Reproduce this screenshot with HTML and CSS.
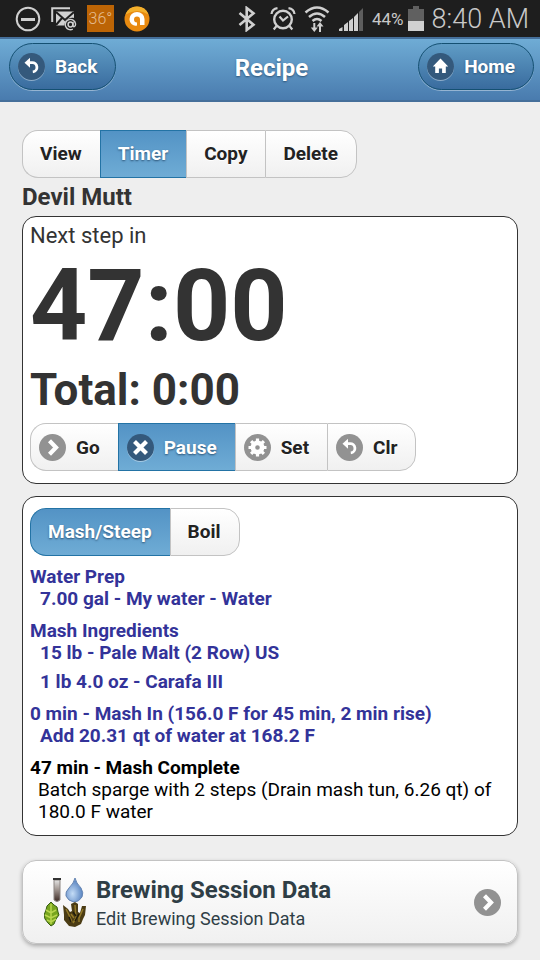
FILE: index.html
```
<!DOCTYPE html>
<html lang="en">

<head>
  <meta charset="UTF-8" />
  <title>Recipe</title>
  <meta name="viewport" content="width=device-width, initial-scale=1.0" />
  <link rel="stylesheet" href="styles.css">
</head>

<body>
  <!-- shared icons -->
  <svg class="sprite" aria-hidden="true">
    <symbol id="ico-back" viewBox="0 0 27 27">
      <path d="M10.500 9.700h3.300a4.600 4.600 0 0 1 1 9.200" fill="none" stroke="#fff" stroke-width="2.800" />
      <path d="M6.500 9.700l5.500-5v10z" fill="#fff" />
    </symbol>
    <symbol id="ico-home" viewBox="0 0 27 27">
      <path d="M13.5 5.5L5.8 13.6h2.4V20h3.700v-4.500h3.200V20h3.700v-6.400h2.400z" fill="#fff" />
    </symbol>
    <symbol id="ico-arrow" viewBox="0 0 27 27">
      <path d="M10.500 6.800l6.500 6.700-6.500 6.700" fill="none" stroke="#fff" stroke-width="4.200" />
    </symbol>
    <symbol id="ico-delete" viewBox="0 0 27 27">
      <path d="M7.500 7.500l12 12M19.500 7.500l-12 12" fill="none" stroke="#fff" stroke-width="4.200" />
    </symbol>
    <symbol id="ico-gear" viewBox="0 0 27 27">
      <circle cx="13.500" cy="13.500" r="4.600" fill="none" stroke="#fff" stroke-width="4.600" />
      <path d="M13.500 4.500v4M13.500 18.500v4M4.500 13.500h4M18.500 13.500h4M7.100 7.100l3 3M16.900 16.900l3 3M19.900 7.100l-3 3M10.100 16.900l-3 3" stroke="#fff" stroke-width="3.200" />
    </symbol>
  </svg>

  <div class="status">
    <div class="status-left">
      <svg width="26" height="26" viewBox="0 0 26 26">
        <circle cx="13" cy="13" r="11.300" fill="none" stroke="#d0d0d0" stroke-width="2" />
        <path d="M6 13.500h14" stroke="#d0d0d0" stroke-width="3" />
      </svg>
      <svg width="26" height="26" viewBox="0 0 26 26">
        <path d="M1.200 16V2.200H19" fill="none" stroke="#d0d0d0" stroke-width="2" />
        <path d="M5 5.500h18v6.500c-5-1-9 2-9.600 7.500H5z" fill="#d0d0d0" />
        <path d="M5 6l9 8 9-8M5 19l6-7" fill="none" stroke="#1e1e1e" stroke-width="2" />
        <circle cx="19.500" cy="18.500" r="2.400" fill="none" stroke="#d0d0d0" stroke-width="1.500" />
        <path d="M22 16v3.500c0 2 2.600 1.500 2.600-1.500a5.200 5.200 0 1 0-2.800 5.200" fill="none" stroke="#d0d0d0" stroke-width="1.400" />
      </svg>
      <span class="temp">36°</span>
      <svg width="26" height="26" viewBox="0 0 26 26">
        <circle cx="13" cy="13" r="12.500" fill="#e98a10" />
        <path d="M1.500 8.500a12.300 12.300 0 0 1 23 0q-11-7-23 0z" fill="#f3b02c" />
        <path d="M9.500 19.300Q5.500 17.500 5.500 13a7.500 7 0 0 1 15 0v6h-4.500v-5.500a3 3 0 1 0-3 3v3q-2 .5-3.500-.2z" fill="#fff" />
      </svg>
    </div>
    <div class="status-right">
      <svg class="bluetooth" width="18" height="26" viewBox="0 0 18 26">
        <path d="M1.500 7l14 11.700L8.700 24V2l6.800 5.300-14 11.700" fill="none" stroke="#d0d0d0" stroke-width="2.600" />
      </svg>
      <svg width="26" height="26" viewBox="0 0 26 26">
        <circle cx="13" cy="13.500" r="8.800" fill="none" stroke="#d0d0d0" stroke-width="2.400" />
        <path d="M9.500 10.500l3.500 4 5-4M6.500 20l-2.800 3.500M19.500 20l2.800 3.500" fill="none" stroke="#d0d0d0" stroke-width="2.200" />
        <path d="M1.500 8q.5-5 6-5.800M24.500 8q-.5-5-6-5.800" fill="none" stroke="#d0d0d0" stroke-width="2.200" />
      </svg>
      <svg width="26" height="28" viewBox="0 0 26 28">
        <path d="M1.500 7.500q11.500-10 23 0M5 12q8-7 16 0M8.500 16q4.500-4 9 0" fill="none" stroke="#d0d0d0" stroke-width="2.500" />
        <path d="M10.300 18v7M16 20v7" stroke="#d0d0d0" stroke-width="2" />
        <path d="M6.800 22.500h7L10.300 27zM12.500 21.500h7L16 17z" fill="#d0d0d0" />
      </svg>
      <svg width="26" height="26" viewBox="0 0 26 26">
        <path d="M1 25v-2l3.500-2v4zM6 25v-6l4-3v9zM11 25V15l4-3v13zM16 25V11l4-4v18z" fill="#d0d0d0" />
        <path d="M21 25V6l4-4v23z" fill="#5d5d5d" />
      </svg>
      <span class="percent">44%</span>
      <svg width="16" height="25" viewBox="0 0 16 25">
        <path d="M0 3h5V0h6v3h5v12H0z" fill="#606060" />
        <path d="M0 15h16v10H0z" fill="#d0d0d0" />
      </svg>
      <span class="clock">8:40 AM</span>
    </div>
  </div>

  <header class="header">
    <a class="pill" href="#back"><svg class="icon icon-dark"><use href="#ico-back" /></svg>Back</a>
    <h1>Recipe</h1>
    <a class="pill" href="#home"><svg class="icon icon-dark"><use href="#ico-home" /></svg>Home</a>
  </header>

  <main class="content">
    <div class="group">
      <button type="button">View</button>
      <button type="button" class="active">Timer</button>
      <button type="button">Copy</button>
      <button type="button">Delete</button>
    </div>
    <h2>Devil Mutt</h2>

    <section class="box timer">
      <div class="next">Next step in</div>
      <div class="countdown">47:00</div>
      <div class="total">Total: 0:00</div>
      <div class="group group-icons">
        <button type="button"><svg class="icon"><use href="#ico-arrow" /></svg>Go</button>
        <button type="button" class="active"><svg class="icon icon-dark"><use href="#ico-delete" /></svg>Pause</button>
        <button type="button"><svg class="icon"><use href="#ico-gear" /></svg>Set</button>
        <button type="button"><svg class="icon"><use href="#ico-back" /></svg>Clr</button>
      </div>
    </section>

    <section class="box steps">
      <div class="group">
        <button type="button" class="active">Mash/Steep</button>
        <button type="button">Boil</button>
      </div>
      <div class="step done">
        <h3>Water Prep</h3>
        <p>7.00 gal - My water - Water</p>
      </div>
      <div class="step done">
        <h3>Mash Ingredients</h3>
        <p>15 lb - Pale Malt (2 Row) US</p>
        <p>1 lb 4.0 oz - Carafa III</p>
      </div>
      <div class="step done">
        <h3>0 min - Mash In (156.0 F for 45 min, 2 min rise)</h3>
        <p>Add 20.31 qt of water at 168.2 F</p>
      </div>
      <div class="step">
        <h3>47 min - Mash Complete</h3>
        <p>Batch sparge with 2 steps (Drain mash tun, 6.26 qt) of 180.0 F water</p>
      </div>
    </section>

    <a class="session" href="#session">
      <svg class="thumb" width="42" height="50" viewBox="0 0 42 50">
        <defs>
          <linearGradient id="tube" x1="0" y1="0" x2="0" y2="1">
            <stop offset="0" stop-color="#e4e4e4" />
            <stop offset=".4" stop-color="#a79d98" />
            <stop offset="1" stop-color="#3c2a24" />
          </linearGradient>
          <radialGradient id="drop" cx=".4" cy=".65" r=".6">
            <stop offset="0" stop-color="#c4dcf6" />
            <stop offset="1" stop-color="#5682c0" />
          </radialGradient>
        </defs>
        <path d="M10 3h6v20q-3 3-6 0z" fill="url(#tube)" stroke="#8b8582" />
        <path d="M9 2h8" stroke="#333" stroke-width="2" />
        <path d="M31 1q1 5 6 10 3 5 1 9-3 5-8 5-6-1-8-6-1-4 3-8 5-5 6-10z" fill="url(#drop)" stroke="#6686b3" />
        <path d="M7 25l3 3 3 2 1 5 1 3-3 4-2 5-3 2-3-3-3-4-1-4 2-5 1-4z" fill="#77a51e" stroke="#375d12" />
        <path d="M7 27v20M2 33l5 3 5-3M1 38l6 3 6-3M3 43l4 2 5-3" fill="none" stroke="#b9d64e" stroke-width="1.500" />
        <path d="M19 28l5 4 2 3 2-1-1-7 4-2 3 2v8l2 1 2-7h4l-1 9-2 4-2 5-6 3-6-1-5-6v-5z" fill="#4b3c14" />
        <path d="M22 32l4 8 2 5M31 28l1 13-3 5M39 32l-4 9v4M27 37l3 4" fill="none" stroke="#937928" stroke-width="1.500" />
        <path d="M29 35l3 4M35 37l-4 7M25 40l2 5" fill="none" stroke="#211c0c" stroke-width="1.500" />
      </svg>
      <span class="session-text">
        <strong>Brewing Session Data</strong>
        <small>Edit Brewing Session Data</small>
      </span>
      <svg class="icon"><use href="#ico-arrow" /></svg>
    </a>
  </main>
</body>

</html>
```
FILE: styles.css
```
* {
  box-sizing: border-box;
}

body {
  margin: 0;
  background: #eee;
  font-family: Roboto, "Liberation Sans", sans-serif;
  color: #333;
}

h1,
h2,
h3,
p {
  margin: 0;
}

.sprite {
  display: none;
}

.icon {
  flex: none;
  width: 27px;
  height: 27px;
  border-radius: 50%;
  background: #929292;
}

.icon-dark {
  background: #34597c;
  box-shadow: 0 1px 0 rgba(255, 255, 255, 0.4);
}

/* phone status bar */
.status {
  display: flex;
  justify-content: space-between;
  align-items: center;
  height: 37px;
  padding: 0 11px 0 15px;
  background: #1e1e1e;
  color: #c8c8c8;
}

.status-left,
.status-right {
  display: flex;
  align-items: center;
}

.status-left {
  gap: 10px;
}

.status-right {
  gap: 8px;
}

.bluetooth {
  margin-right: 6px;
}

.temp {
  width: 27px;
  background: #bc6405;
  color: #e6bd91;
  font-size: 16px;
  font-weight: 300;
  line-height: 27px;
  text-align: center;
}

.percent {
  font-size: 17px;
}

.percent + svg {
  margin-left: -4px;
}

.clock {
  font-size: 27px;
  font-weight: 300;
}

.header {
  display: grid;
  grid-template-columns: 1fr auto 1fr;
  align-items: center;
  height: 65px;
  padding: 0 6px 6px 9px;
  border: 1px solid #456f9a;
  border-width: 2px 0;
  background: linear-gradient(#6facd5, #497bae);
  color: #fff;
  text-shadow: 0 1px 2px #2d5577;
}

.header h1 {
  padding-top: 3px;
  font-size: 24px;
  line-height: 28px;
}

.pill {
  display: flex;
  align-items: center;
  justify-self: start;
  gap: 10px;
  height: 47px;
  padding: 0 18px 0 8px;
  border: 1px solid #145072;
  border-radius: 24px;
  background: linear-gradient(#5f9cc5, #396b9e);
  box-shadow: 0 1px 0 rgba(255, 255, 255, 0.4);
  color: #fff;
  font-size: 19px;
  font-weight: 700;
  text-decoration: none;
}

.pill:last-child {
  justify-self: end;
}

.content {
  padding: 28px 22px 16px;
}

.group {
  display: flex;
}

.group button {
  display: flex;
  align-items: center;
  gap: 10px;
  height: 48px;
  padding: 0 18px 2px 17px;
  border: 1px solid #c3c3c3;
  border-right-width: 0;
  background: linear-gradient(#fff, #f0f0f0);
  color: #222;
  font: 700 19px Roboto, "Liberation Sans", sans-serif;
  text-shadow: 0 1px 0 #fff;
  cursor: pointer;
}

.group button:first-child {
  border-radius: 16px 0 0 16px;
}

.group button:last-child {
  border-right-width: 1px;
  border-radius: 0 16px 16px 0;
}

.group .active {
  border-color: #2373a5;
  background: linear-gradient(#5393c5, #6facd5);
  color: #fff;
  text-shadow: 0 1px 2px #2d5577;
}

.group-icons button {
  padding-left: 8px;
  padding-bottom: 0;
}

h2 {
  margin: 5px 0;
  font-size: 24px;
  line-height: 28px;
}

.box {
  border: 1px solid #333;
  border-radius: 14px;
  background: #fff;
  padding: 0 7px;
}

.timer {
  padding-top: 1px;
  padding-bottom: 12px;
}

.next {
  font-size: 22px;
  line-height: 36px;
}

.countdown {
  font-size: 100px;
  font-weight: 700;
  line-height: 104px;
}

.total {
  font-size: 44px;
  font-weight: 700;
  line-height: 65px;
}

.steps {
  margin-top: 12px;
  padding-top: 11px;
  padding-bottom: 12px;
}

.step {
  padding-top: 9px;
  color: #000;
  font-size: 19px;
  line-height: 22px;
}

.step h3 {
  font-size: 19px;
  line-height: 23px;
}

.step p {
  padding-left: 8px;
}

.step p + p {
  padding-top: 7px;
}

.done {
  color: #333399;
  font-weight: 700;
}

.done p {
  padding-left: 10px;
}

.session {
  display: flex;
  align-items: center;
  gap: 10px;
  margin-top: 24px;
  padding: 10px 16px 10px 21px;
  border: 1px solid #c3c3c3;
  border-radius: 14px;
  background: linear-gradient(#fff, #f0f0f0);
  box-shadow: 0 2px 4px rgba(0, 0, 0, 0.3);
  color: #2f3e46;
  text-decoration: none;
}

.session-text {
  flex: 1;
  padding-top: 4px;
}

.session strong,
.session small {
  display: block;
}

.session strong {
  font-size: 24px;
  line-height: 30px;
}

.session small {
  font-size: 18px;
  line-height: 28px;
}
```
